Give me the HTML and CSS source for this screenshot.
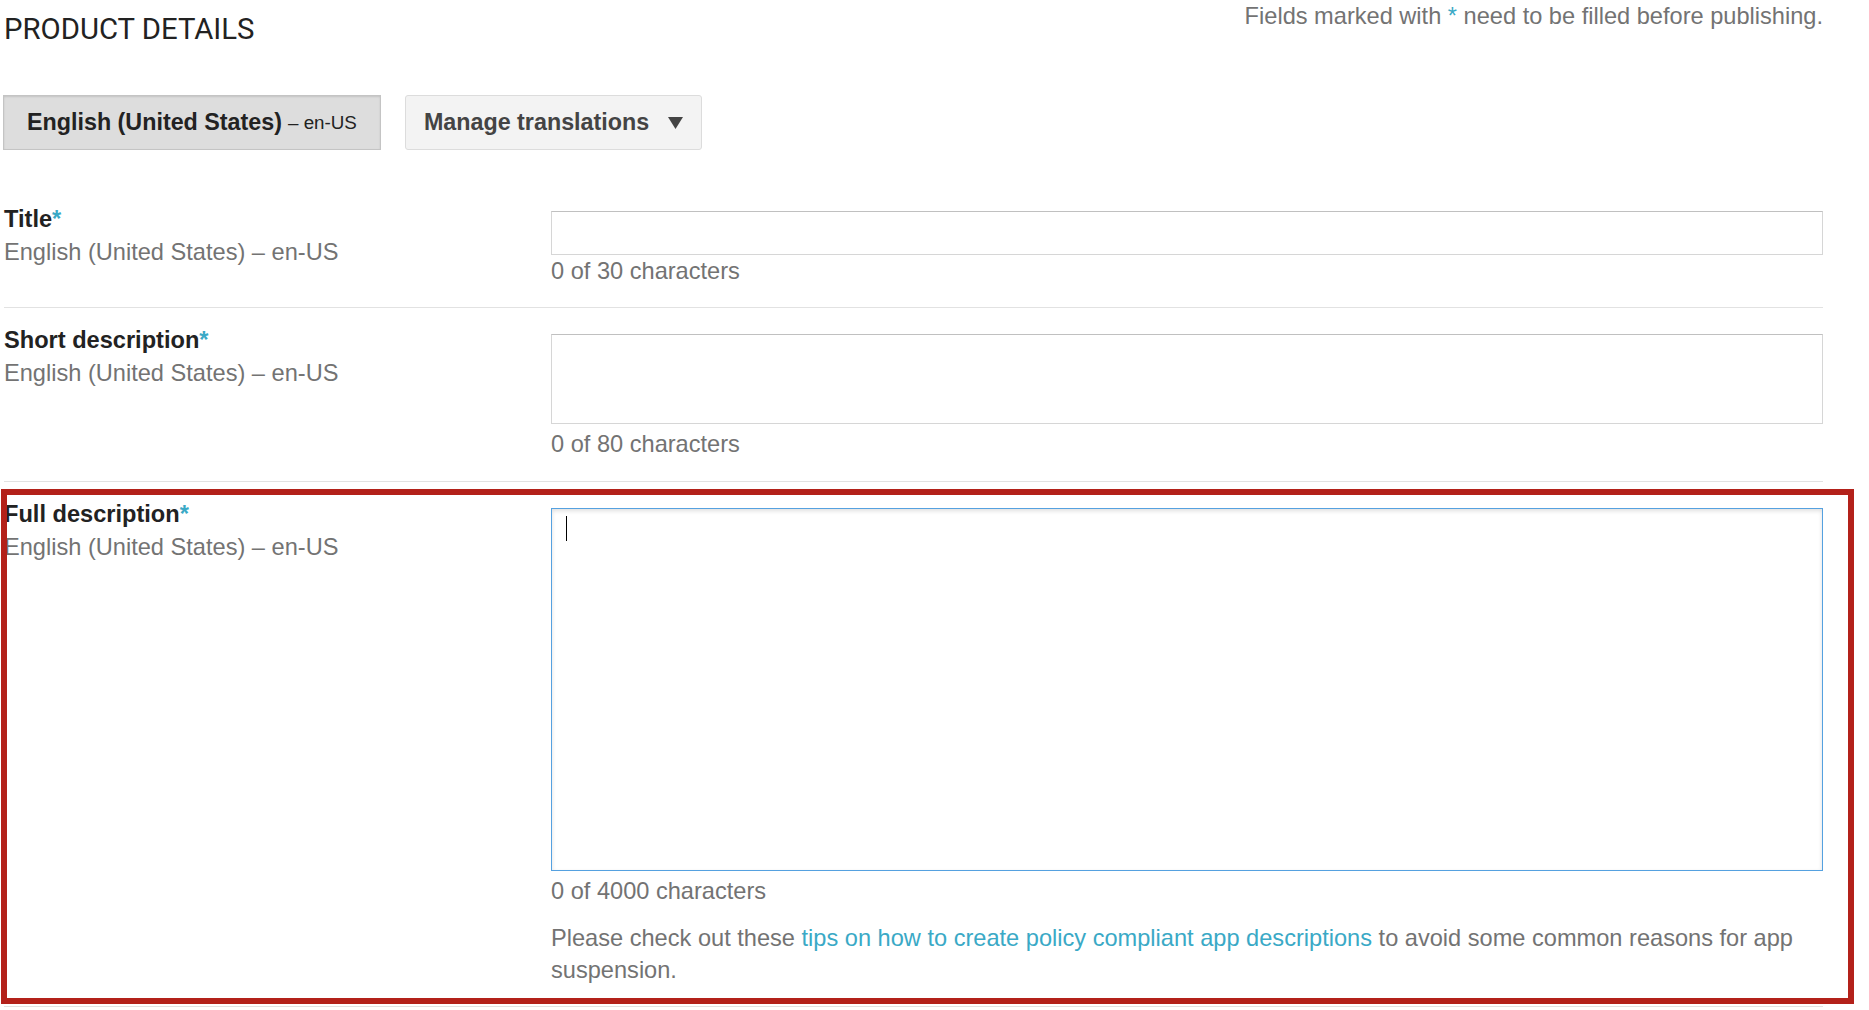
FILE: index.html
```html
<!DOCTYPE html>
<html lang="en">
<head>
<meta charset="utf-8">
<title>Product details</title>
<link rel="stylesheet" href="styles.css">
</head>
<body>
<div class="page">
  <header class="header">
    <h1 class="heading">PRODUCT DETAILS</h1>
    <p class="legend">Fields marked with <span class="req">*</span> need to be filled before publishing.</p>
  </header>

  <div class="lang-bar">
    <button class="btn btn-current" type="button"><span class="btn-main">English (United States)</span><span class="btn-sub">&ndash; en-US</span></button>
    <button class="btn btn-menu" type="button"><span>Manage translations</span><svg class="caret-down" width="15" height="12" viewBox="0 0 15 12"><polygon points="0,0 15,0 7.5,12" fill="#444"/></svg></button>
  </div>

  <div class="rows">
    <section class="row row-title">
      <div class="label-col">
        <div class="label">Title<span class="req">*</span></div>
        <div class="locale">English (United States) &ndash; en-US</div>
      </div>
      <div class="field-col">
        <div class="input input-title"></div>
        <div class="counter">0 of 30 characters</div>
      </div>
    </section>

    <section class="row row-short">
      <div class="label-col">
        <div class="label">Short description<span class="req">*</span></div>
        <div class="locale">English (United States) &ndash; en-US</div>
      </div>
      <div class="field-col">
        <div class="input input-short"></div>
        <div class="counter">0 of 80 characters</div>
      </div>
    </section>

    <section class="row row-full">
      <div class="label-col">
        <div class="label">Full description<span class="req">*</span></div>
        <div class="locale">English (United States) &ndash; en-US</div>
      </div>
      <div class="field-col">
        <div class="input input-full"><span class="text-caret"></span></div>
        <div class="counter">0 of 4000 characters</div>
        <p class="tip">Please check out these <a class="link" href="#">tips on how to create policy compliant app descriptions</a> to avoid some common reasons for app suspension.</p>
      </div>
      <div class="highlight"></div>
    </section>
  </div>
</div>
</body>
</html>
```

FILE: styles.css
```css
html, body {
  margin: 0;
  padding: 0;
  background: #ffffff;
  overflow: hidden;
}

body {
  font-family: "Liberation Sans", Arial, Helvetica, sans-serif;
  font-size: 23.6px;
  color: #222222;
}

.page {
  padding: 0 46px 0 4px;
}

.header {
  display: flex;
  justify-content: space-between;
  align-items: flex-start;
}

.heading {
  margin: 11px 0 0 0;
  font-family: Roboto, "Liberation Sans", sans-serif;
  font-weight: 400;
  font-size: 29.3px;
  line-height: 36px;
  color: #222222;
}

.legend {
  margin: 0;
  line-height: 32px;
  color: #737373;
}

.req {
  color: #3aa9c6;
}

.lang-bar {
  display: flex;
  gap: 24px;
  margin-top: 48px;
  margin-left: -1px;
}

.btn {
  box-sizing: border-box;
  height: 55px;
  display: flex;
  align-items: center;
  margin: 0;
  font-family: "Liberation Sans", Arial, Helvetica, sans-serif;
  font-size: 23.3px;
  font-weight: 700;
  cursor: pointer;
}

.btn-current {
  padding: 0 23px;
  background: #dddddd;
  border: 1px solid #c4c4c4;
  border-radius: 0;
  box-shadow: inset 0 1px 2px rgba(0, 0, 0, 0.12);
  color: #222222;
}

.btn-sub {
  margin-left: 6px;
  font-weight: 400;
  font-size: 18.8px;
  color: #222222;
}

.btn-menu {
  padding: 0 18px;
  background: #f3f3f3;
  border: 1px solid #dcdcdc;
  border-radius: 3px;
  color: #444444;
}

.caret-down {
  margin-left: 19px;
  display: block;
}

.rows {
  margin-top: 37px;
}

.row {
  position: relative;
  display: grid;
  grid-template-columns: 547px 1fr;
  padding: 16px 0 20px 0;
  border-bottom: 1px solid #e2e2e2;
}

.label {
  font-weight: 700;
  line-height: 33px;
  color: #222222;
}

.locale {
  line-height: 33px;
  color: #737373;
}

.field-col {
  margin-top: 10px;
}

.row-title .field-col {
  margin-top: 8px;
}

.row-title {
  padding-bottom: 19px;
}

.input {
  box-sizing: border-box;
  background: #ffffff;
  border: 1px solid #d6d6d6;
  border-top-color: #c0c0c0;
}

.input-title {
  height: 44px;
}

.input-short {
  height: 90px;
}

.input-full {
  height: 363px;
  border: 1px solid #55a1e0;
  box-shadow: inset 0 2px 4px rgba(0, 0, 0, 0.13);
  padding: 7px 0 0 14px;
}

.text-caret {
  display: block;
  width: 1px;
  height: 25px;
  background: #000000;
}

.counter {
  margin-top: 4px;
  line-height: 33px;
  color: #737373;
}

.row-title .counter {
  margin-top: 0;
}

.tip {
  margin: 14px 0 0 0;
  line-height: 32px;
  color: #737373;
}

.link {
  color: #3aa9c6;
  text-decoration: none;
}

.highlight {
  position: absolute;
  top: 7px;
  left: -3px;
  right: -31px;
  bottom: 2px;
  border: 6px solid #b3211a;
  pointer-events: none;
}
```
